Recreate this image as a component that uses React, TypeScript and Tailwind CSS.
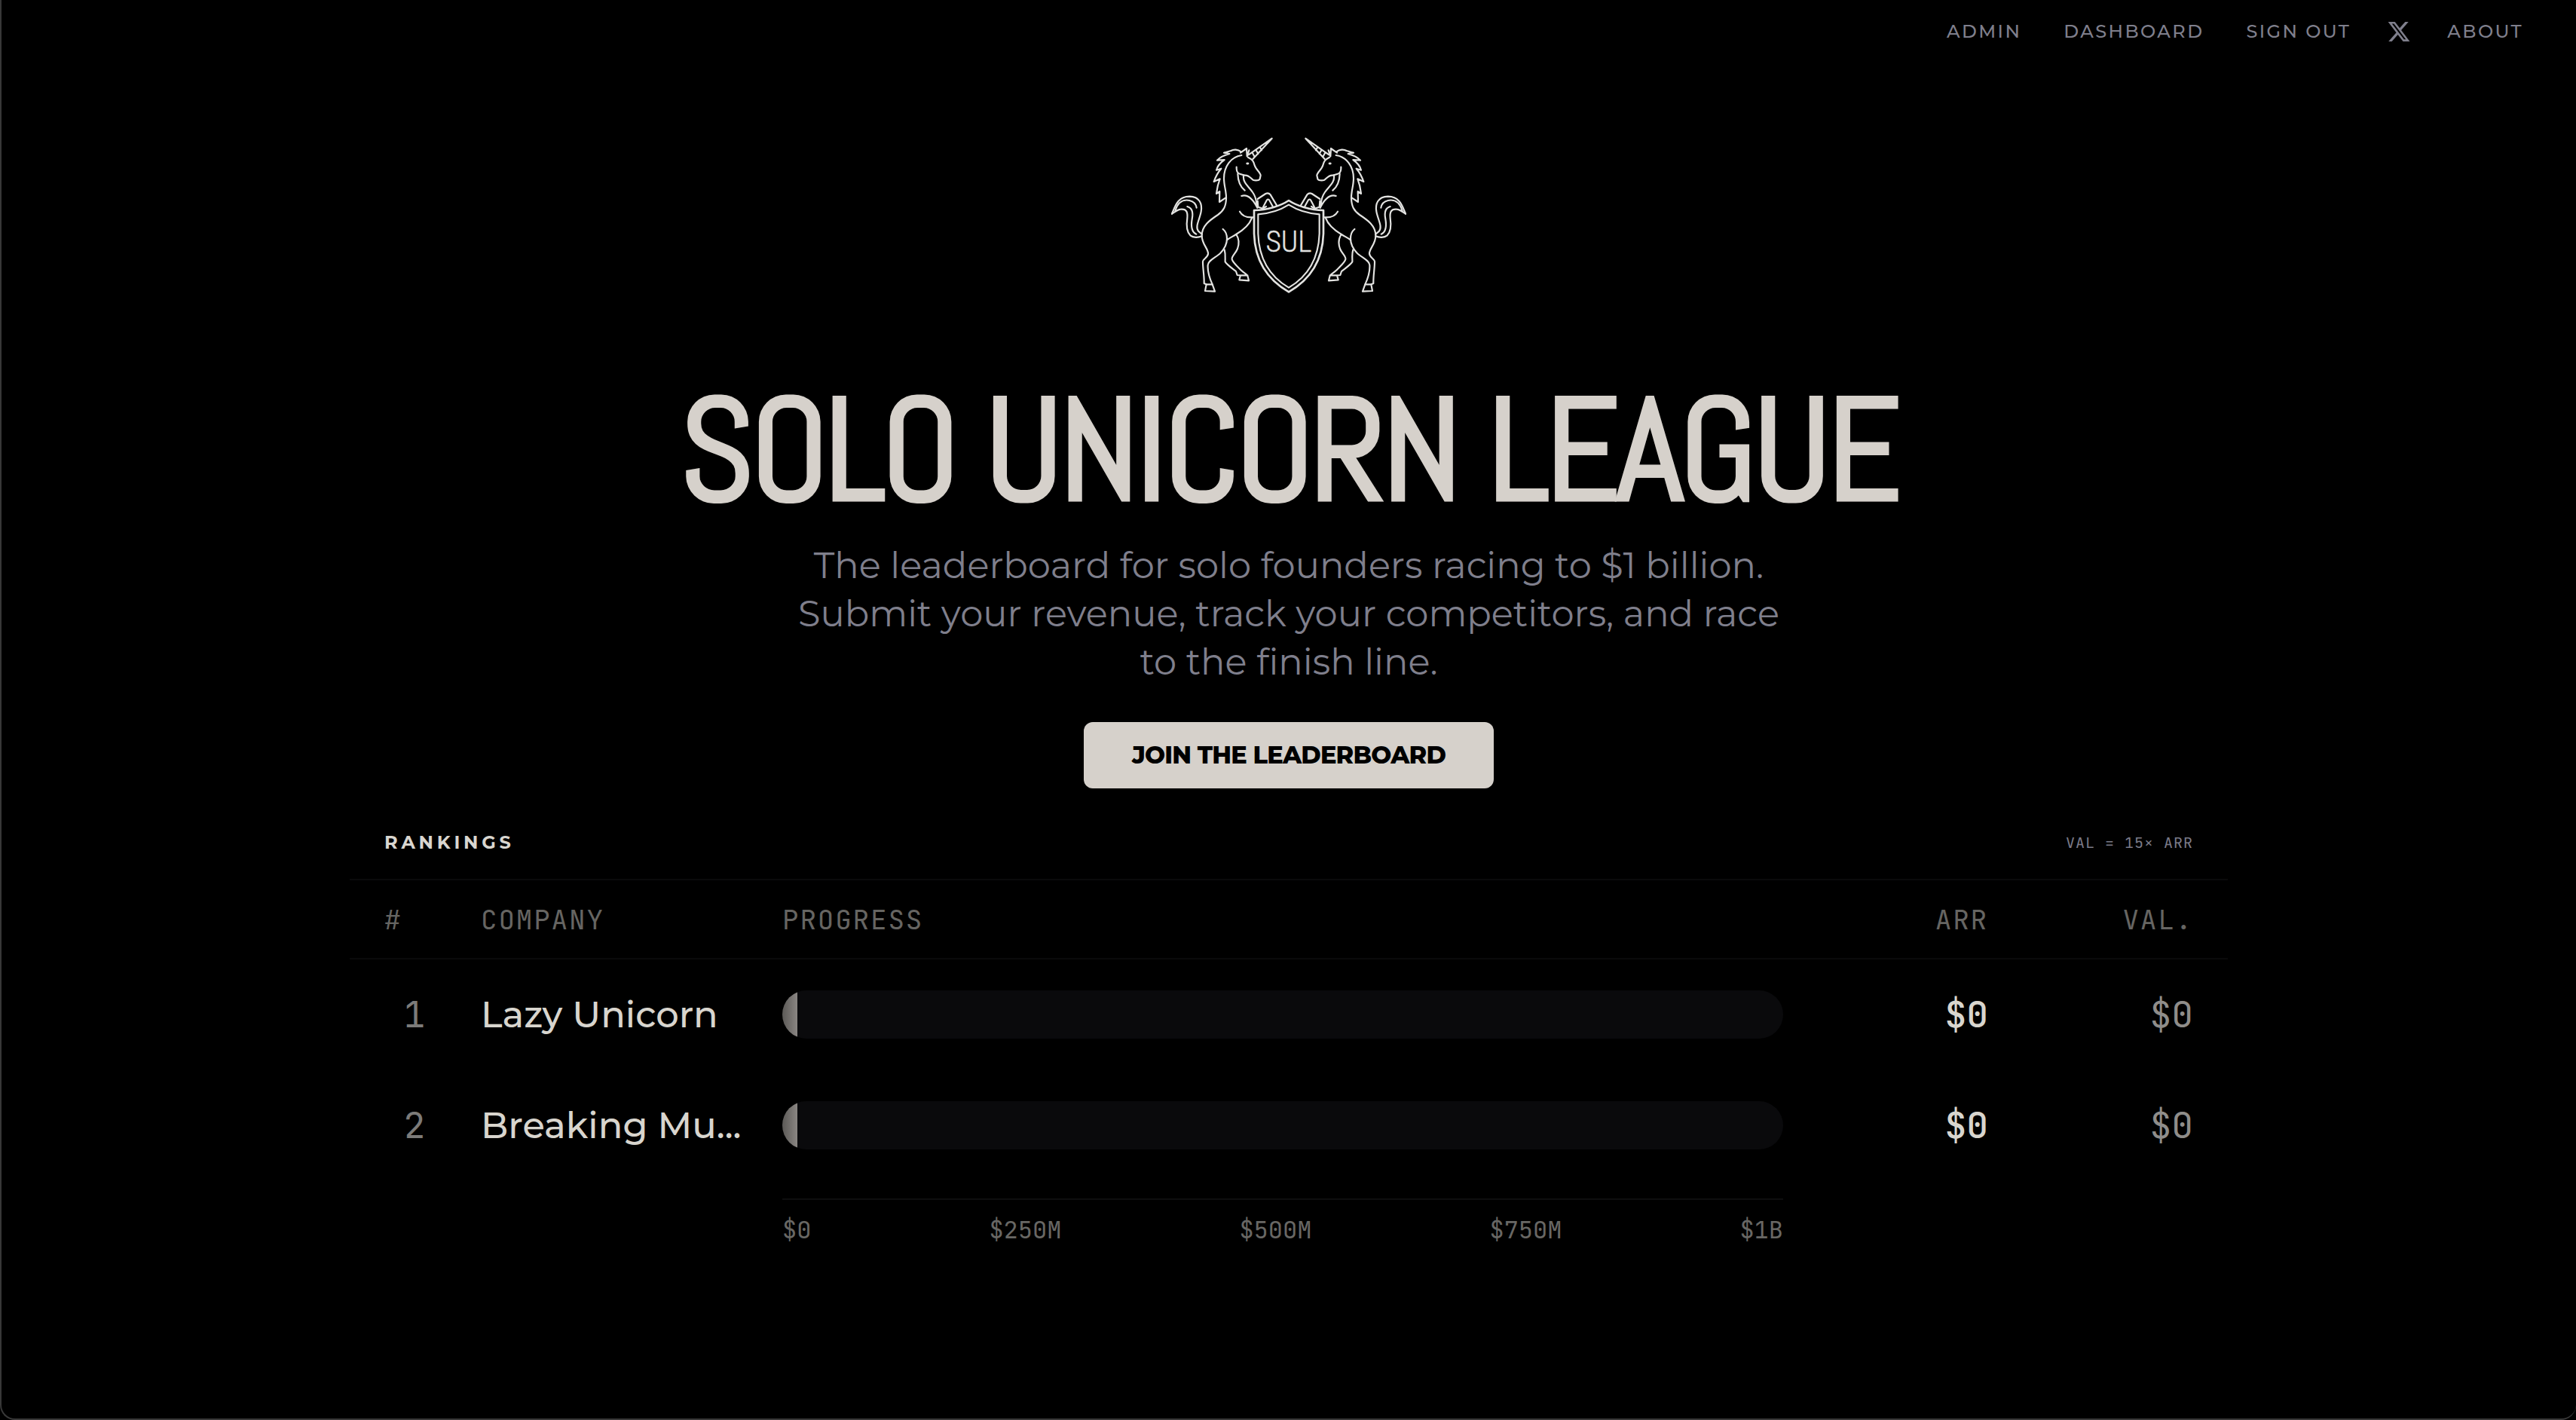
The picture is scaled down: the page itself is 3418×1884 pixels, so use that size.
type Company = { rank: number; name: string; progress: number; arr: string; valuation: string };

const companies: Company[] = [
  { rank: 1, name: 'Lazy Unicorn', progress: 1.5, arr: '$0', valuation: '$0' },
  { rank: 2, name: 'Breaking Mu...', progress: 1.5, arr: '$0', valuation: '$0' },
];

const ticks = ['$0', '$250M', '$500M', '$750M', '$1B'];

function Unicorn() {
  return (
    <g>
      <path d="M165 461C178 430 188 392 235 392C276 393 286 422 281 452C276 482 256 512 270 530L285 543" />
      <path d="M165 461C180 450 190 444 200 443C224 440 228 456 226 478C222 505 224 532 238 547C250 557 270 556 284 550" />
      <path d="M178 448C190 412 213 403 235 408C252 412 261 424 263 437" />
      <path d="M226 432C248 438 249 462 245 482C240 512 244 534 262 542" />
      <path d="M442 228C400 234 372 272 372 320C372 350 382 372 381 400C380 430 372 448 348 465C316 486 284 508 284 548C284 582 310 600 309 620C308 636 288 640 288 652C288 680 294 710 293 738L302 742L297 768L336 770L326 742C315 718 306 692 308 665C310 645 340 635 358 617C376 598 384 580 384 560C384 545 378 530 368 522" />
      <path d="M302 742H326M384 565C395 556 410 550 420 543C445 528 472 508 483 478" />
      <path d="M421 543C432 560 434 578 426 600C418 620 402 630 404 642C407 655 430 675 442 687C450 695 462 700 466 707L471 727L433 724L438 706H466M438 706L425 705L420 690C408 680 384 664 377 652C376 640 380 625 374 604" />
      <path d="M435 452C445 470 462 477 488 475M450 308C446 340 474 354 488 378C502 398 500 412 504 435M427 302C428 335 438 354 455 368M442 390C466 382 486 400 505 437" />
      <path d="M422 275C421 300 430 302 455 308C472 306 480 322 488 326C498 330 514 328 515 322L518 308C516 294 498 284 494 268C490 252 486 245 468 236" />
      <path d="M438 218L462 201L464 232L472 208M470 226L563 161L487 243M484 216L494 234M499 206L508 222M515 195L522 208" />
      <path d="M440 214C428 204 410 204 400 210L372 218L394 222C372 228 356 236 345 248L374 246C354 260 346 272 342 287L361 281C346 298 338 316 332 333L356 322C348 342 344 362 342 381L355 372L354 414L378 398" />
      <ellipse cx="466" cy="261" rx="3" ry="1" />
      <path d="M506 402L538 381Q549 376 557 385L582 427M528 434L543 406Q547 401 552 406L566 431M506 410L508 434L528 440L540 432" />
    </g>
  );
}

function Crest() {
  return (
    <svg
      viewBox="0 0 1260 960"
      className="h-80 w-[420px] max-w-full"
      fill="none"
      stroke="#e3e3e1"
      strokeWidth="6.5"
      strokeLinejoin="round"
      strokeLinecap="round"
      role="img"
      aria-label="Solo Unicorn League crest"
    >
      <Unicorn />
      <g transform="matrix(-1 0 0 1 1260 0)">
        <Unicorn />
      </g>
      <path
        strokeWidth="8"
        d="M630 408C600 428 545 447 492 447V540C495 640 540 720 630 772C720 720 765 640 768 540V447C715 447 660 428 630 408Z"
      />
      <path d="M630 425C600 444 555 460 508 463V540C511 632 550 708 630 755C710 708 749 632 752 540V463C705 460 660 444 630 425Z" />
      <text
        x="630"
        y="612"
        textAnchor="middle"
        fill="#e3e3e1"
        stroke="#e3e3e1"
        strokeWidth="1"
        fontSize="118"
        className="font-['Roboto_Condensed',Roboto,sans-serif] font-light"
      >
        SUL
      </text>
    </svg>
  );
}

function XLogo() {
  return (
    <svg viewBox="0 0 24 24" className="size-8" fill="currentColor" aria-hidden="true">
      <path d="M18.244 2.25h3.308l-7.227 8.26 8.502 11.24H16.17l-5.214-6.817L4.99 21.75H1.68l7.73-8.835L1.254 2.25H8.08l4.713 6.231zm-1.161 17.52h1.833L7.084 4.126H5.117z" />
    </svg>
  );
}

function ProgressBar({ value, label }: { value: number; label: string }) {
  return (
    <div
      role="progressbar"
      aria-label={label}
      aria-valuenow={value}
      aria-valuemin={0}
      aria-valuemax={100}
      className="h-16 overflow-hidden rounded-full bg-[#0a0a0c]"
    >
      <div
        className="h-full rounded-r-sm bg-gradient-to-r from-[#5c5a57] to-[#8a8683]"
        style={{ width: `${value}%` }}
      />
    </div>
  );
}

function Nav() {
  return (
    <nav className="flex items-center justify-end gap-12 px-[70px] pt-6 text-2xl leading-9 font-medium tracking-widest text-[#7f7f8c]">
      <div className="flex items-center gap-14">
        <a href="#admin">ADMIN</a>
        <a href="#dashboard">DASHBOARD</a>
        <a href="#sign-out">SIGN OUT</a>
      </div>
      <a href="#x" aria-label="X">
        <XLogo />
      </a>
      <a href="#about">ABOUT</a>
    </nav>
  );
}

function Rankings() {
  return (
    <section className="mx-auto mt-6 w-full max-w-[2492px]">
      <div className="flex items-center justify-between border-b-2 border-[#0a0a0b] px-[46px] pt-8 pb-8">
        <h2 className="text-2xl leading-8 font-bold tracking-[0.2em] text-[#d9d6d0]">RANKINGS</h2>
        <p className="font-['JetBrains_Mono','Liberation_Mono',monospace] text-xl leading-8 tracking-wider text-[#7b7b89]">
          VAL = 15× ARR
        </p>
      </div>
      <table className="w-full table-fixed border-collapse font-['JetBrains_Mono','Liberation_Mono',monospace]">
        <colgroup>
          <col className="w-[174px]" />
          <col className="w-[400px]" />
          <col />
          <col className="w-[272px]" />
          <col className="w-[318px]" />
        </colgroup>
        <thead>
          <tr className="h-[104px] border-b-2 border-[#0a0a0b] text-left text-4xl tracking-wider text-[#666562]">
            <th scope="col" className="pl-[46px] font-normal">#</th>
            <th scope="col" className="font-normal">COMPANY</th>
            <th scope="col" className="font-normal">PROGRESS</th>
            <th scope="col" className="text-right font-normal">ARR</th>
            <th scope="col" className="pr-[46px] text-right font-normal">VAL.</th>
          </tr>
        </thead>
        <tbody>
          {companies.map((c) => (
            <tr key={c.rank} className="h-[147px] text-5xl">
              <td className="pr-12 pl-[46px] text-center text-[#7c7b79]">{c.rank}</td>
              <td className="pr-12">
                <div className="truncate font-['Montserrat',Inter,sans-serif] leading-16 font-medium text-[#d8d5ce]">
                  {c.name}
                </div>
              </td>
              <td>
                <ProgressBar value={c.progress} label={`${c.name} progress`} />
              </td>
              <td className="text-right font-medium text-[#d8d5ce]">{c.arr}</td>
              <td className="pr-[46px] text-right text-[#8f8d8a]">{c.valuation}</td>
            </tr>
          ))}
        </tbody>
        <tfoot>
          <tr>
            <td colSpan={2} />
            <td className="pt-6">
              <div className="flex justify-between border-t-2 border-[#0e0e0f] pt-4 text-[32px] leading-12 text-[#686764]">
                {ticks.map((t) => (
                  <span key={t}>{t}</span>
                ))}
              </div>
            </td>
            <td colSpan={2} />
          </tr>
        </tfoot>
      </table>
    </section>
  );
}

export default function App() {
  return (
    <div className="min-h-screen bg-black">
      <div className="min-h-screen rounded-b-[20px] border-b-2 border-l-2 border-[#383838] bg-black font-['Montserrat',Inter,sans-serif] antialiased">
        <Nav />
        <main>
          <section className="mt-[70px] flex flex-col items-center text-center">
            <Crest />
            <h1 className="mt-12 font-['Abel','Barlow_Condensed','Roboto_Condensed',sans-serif] text-[192px] leading-[200px] font-bold tracking-tight text-[#d6d1cb]">
              SOLO UNICORN LEAGUE
            </h1>
            <p className="mt-5 max-w-[1344px] text-5xl leading-16 text-[#7f7f8c]">
              The leaderboard for solo founders racing to $1 billion. Submit your revenue, track your competitors,
              and race to the finish line.
            </p>
            <button
              type="button"
              className="mt-12 rounded-xl bg-[#d6d1cb] px-16 py-5 text-[32px] leading-12 font-extrabold tracking-tight text-black"
            >
              JOIN THE LEADERBOARD
            </button>
          </section>
          <Rankings />
        </main>
      </div>
    </div>
  );
}
